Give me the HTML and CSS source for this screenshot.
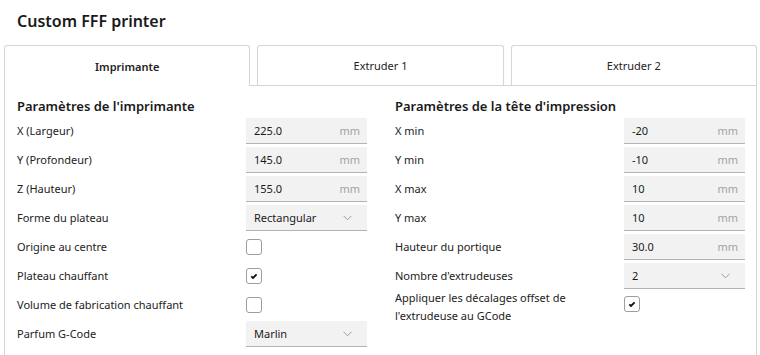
FILE: index.html
```html
<!DOCTYPE html>
<html lang="fr">
<head>
    <meta charset="UTF-8">
    <title>Custom FFF printer</title>
    <link rel="stylesheet" href="styles.css">
</head>
<body>
    <h1 class="title">Custom FFF printer</h1>

    <div class="tabs">
        <div class="tab active">Imprimante</div>
        <div class="tab">Extruder 1</div>
        <div class="tab">Extruder 2</div>
    </div>

    <div class="panel">
        <div class="columns">
            <section class="column">
                <h2>Paramètres de l'imprimante</h2>
                <div class="fields">
                    <label>X (Largeur)</label>
                    <div class="field"><span>225.0</span><span class="unit">mm</span></div>

                    <label>Y (Profondeur)</label>
                    <div class="field"><span>145.0</span><span class="unit">mm</span></div>

                    <label>Z (Hauteur)</label>
                    <div class="field"><span>155.0</span><span class="unit">mm</span></div>

                    <label>Forme du plateau</label>
                    <div class="field select"><span>Rectangular</span>
                        <svg class="chevron" width="9" height="6" viewBox="0 0 9 6"><polyline points="0.5,0.8 4.5,4.8 8.5,0.8"/></svg>
                    </div>

                    <label>Origine au centre</label>
                    <div class="check-cell"><span class="checkbox"></span></div>

                    <label>Plateau chauffant</label>
                    <div class="check-cell"><span class="checkbox">
                        <svg width="14" height="14" viewBox="0 0 14 14"><polyline points="4.3,7.3 6,9 9.6,5.3"/></svg>
                    </span></div>

                    <label>Volume de fabrication chauffant</label>
                    <div class="check-cell"><span class="checkbox"></span></div>

                    <label>Parfum G-Code</label>
                    <div class="field select"><span>Marlin</span>
                        <svg class="chevron" width="9" height="6" viewBox="0 0 9 6"><polyline points="0.5,0.8 4.5,4.8 8.5,0.8"/></svg>
                    </div>
                </div>
            </section>

            <section class="column">
                <h2>Paramètres de la tête d'impression</h2>
                <div class="fields">
                    <label>X min</label>
                    <div class="field"><span>-20</span><span class="unit">mm</span></div>

                    <label>Y min</label>
                    <div class="field"><span>-10</span><span class="unit">mm</span></div>

                    <label>X max</label>
                    <div class="field"><span>10</span><span class="unit">mm</span></div>

                    <label>Y max</label>
                    <div class="field"><span>10</span><span class="unit">mm</span></div>

                    <label>Hauteur du portique</label>
                    <div class="field"><span>30.0</span><span class="unit">mm</span></div>

                    <label>Nombre d'extrudeuses</label>
                    <div class="field select"><span>2</span>
                        <svg class="chevron" width="9" height="6" viewBox="0 0 9 6"><polyline points="0.5,0.8 4.5,4.8 8.5,0.8"/></svg>
                    </div>

                    <label class="multiline">Appliquer les décalages offset de l'extrudeuse au GCode</label>
                    <div class="check-cell top"><span class="checkbox">
                        <svg width="14" height="14" viewBox="0 0 14 14"><polyline points="4.3,7.3 6,9 9.6,5.3"/></svg>
                    </span></div>
                </div>
            </section>
        </div>
    </div>
</body>
</html>
```

FILE: styles.css
```css
body {
    margin: 0;
    background: #fff;
    color: #1f1f1f;
    font-family: "Noto Sans", "Open Sans", sans-serif;
    font-size: 11px;
}

.title {
    margin: 0;
    height: 45px;
    box-sizing: border-box;
    padding: 9px 0 0 17px;
    font-size: 16px;
    line-height: 24px;
    font-weight: 600;
    color: #1a1a1a;
}

/* Tabs */
.tabs {
    display: flex;
    gap: 7px;
    margin: 0 3px 0 4px;
}

.tab {
    flex: 1;
    height: 39px;
    display: flex;
    align-items: center;
    justify-content: center;
    border: 1px solid #d6d6d6;
    border-bottom: none;
    border-radius: 3px 3px 0 0;
    background: #fff;
    color: #222;
}

.tab.active {
    position: relative;
    z-index: 1;
    margin-bottom: -1px;
    height: 40px;
    font-weight: 600;
}

/* Panel */
.panel {
    margin: 0 3px 0 4px;
    border: 1px solid #d6d6d6;
    padding: 0 12px 40px;
}

.columns {
    display: grid;
    grid-template-columns: 350px 349px;
    column-gap: 28px;
}

.column h2 {
    margin: 0;
    padding-top: 11px;
    margin-bottom: 2px;
    font-size: 13px;
    line-height: 19px;
    font-weight: 600;
    color: #1a1a1a;
}

.fields {
    display: grid;
    grid-template-columns: 229px 121px;
    grid-auto-rows: minmax(26px, auto);
    row-gap: 3px;
}

.fields label {
    align-self: center;
    color: #222;
    margin-top: -1px;
}

.fields label.multiline {
    align-self: start;
    margin-top: -3px;
    line-height: 18px;
    padding-right: 20px;
}

.field {
    display: flex;
    align-items: center;
    justify-content: space-between;
    height: 26px;
    box-sizing: border-box;
    padding: 0 7px 0 8px;
    background: #f2f2f2;
    border-bottom: 1px solid #b3b3b3;
    color: #1a1a1a;
}

.unit {
    color: #a3a3a3;
}

.chevron {
    margin-right: 8px;
}

.chevron polyline {
    fill: none;
    stroke: #9a9a9a;
    stroke-width: 1;
}

.check-cell {
    display: flex;
    align-items: center;
}

.check-cell.top {
    align-items: flex-start;
    padding-top: 4px;
}

.checkbox {
    width: 16px;
    height: 16px;
    box-sizing: border-box;
    border: 1px solid #9e9e9e;
    border-radius: 3px;
    background: #fff;
    display: flex;
    align-items: center;
    justify-content: center;
}

.checkbox polyline {
    fill: none;
    stroke: #111;
    stroke-width: 1.8;
}
```
